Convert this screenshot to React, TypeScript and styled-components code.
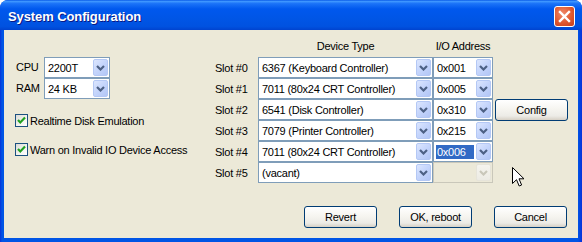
import React from "react";
import styled, { createGlobalStyle } from "styled-components";

const GlobalStyle = createGlobalStyle`
  html, body {
    margin: 0;
    padding: 0;
    background: #ffffff;
  }
  body {
    width: 582px;
    height: 242px;
    overflow: hidden;
    font-family: "Liberation Sans", Arial, sans-serif;
    font-size: 11px;
    letter-spacing: -0.25px;
    color: #000000;
  }
`;

const slots = [
  { device: "6367 (Keyboard Controller)", io: "0x001" },
  { device: "7011 (80x24 CRT Controller)", io: "0x005" },
  { device: "6541 (Disk Controller)", io: "0x310" },
  { device: "7079 (Printer Controller)", io: "0x215" },
  { device: "7011 (80x24 CRT Controller)", io: "0x006", selected: true },
  { device: "(vacant)", io: "", disabled: true },
];

const Chevron = ({ disabled }: { disabled?: boolean }) => (
  <svg width="9" height="6" viewBox="0 0 9 6">
    <path
      d="M1 1 L4.5 4.5 L8 1"
      fill="none"
      stroke={disabled ? "#c9c7ba" : "#4d6185"}
      strokeWidth="2.2"
    />
  </svg>
);

const Combo = ({
  value,
  width,
  selected,
  disabled,
}: {
  value: string;
  width: number;
  selected?: boolean;
  disabled?: boolean;
}) => (
  <ComboBox $width={width} $disabled={disabled}>
    <Field $selected={selected}>{value}</Field>
    <DropButton $disabled={disabled}>
      <Chevron disabled={disabled} />
    </DropButton>
  </ComboBox>
);

const Check = ({ label }: { label: string }) => (
  <CheckRow>
    <CheckBox>
      <svg width="11" height="11" viewBox="0 0 11 11">
        <path d="M2 5 L4.3 7.4 L9 2.6" fill="none" stroke="#21a121" strokeWidth="2.2" />
      </svg>
    </CheckBox>
    <span>{label}</span>
  </CheckRow>
);

const App = () => {
  return (
    <>
      <GlobalStyle />
      <Window>
        <TitleBar>
          <Title>System Configuration</Title>
          <CloseButton>
            <svg width="13" height="13" viewBox="0 0 13 13">
              <path d="M2 2 L11 11 M11 2 L2 11" stroke="#ffffff" strokeWidth="2.4" strokeLinecap="square" />
            </svg>
          </CloseButton>
        </TitleBar>
        <Client>
          <Main>
            <LeftPanel>
              <HwGrid>
                <Label>CPU</Label>
                <Combo value="2200T" width={66} />
                <Label>RAM</Label>
                <Combo value="24 KB" width={66} />
              </HwGrid>
              <CheckList>
                <Check label="Realtime Disk Emulation" />
                <Check label="Warn on Invalid IO Device Access" />
              </CheckList>
            </LeftPanel>
            <SlotGrid>
              <Header $col={2}>Device Type</Header>
              <Header $col={3}>I/O Address</Header>
              {slots.map((s, i) => (
                <React.Fragment key={i}>
                  <SlotLabel $row={i + 2}>Slot #{i}</SlotLabel>
                  <Cell $row={i + 2} $col={2}>
                    <Combo value={s.device} width={175} />
                  </Cell>
                  <Cell $row={i + 2} $col={3}>
                    <Combo value={s.io} width={60} selected={s.selected} disabled={s.disabled} />
                  </Cell>
                </React.Fragment>
              ))}
              <ConfigCell>
                <Button>Config</Button>
              </ConfigCell>
            </SlotGrid>
          </Main>
          <Footer>
            <Button>Revert</Button>
            <Button>OK, reboot</Button>
            <Button>Cancel</Button>
          </Footer>
          <Cursor>
            <svg width="13" height="21" viewBox="0 0 13 21">
              <path
                d="M0.5 0.5 L0.5 16.5 L4.5 12.7 L7.2 19 L9.6 18 L7 11.8 L12 11.8 Z"
                fill="#ffffff"
                stroke="#000000"
                strokeWidth="1"
              />
            </svg>
          </Cursor>
        </Client>
      </Window>
    </>
  );
};

export default App;

const Window = styled.div`
  width: 582px;
  height: 242px;
  display: flex;
  flex-direction: column;
  border-radius: 8px 8px 0 0;
  overflow: hidden;
  background: linear-gradient(90deg, #0831d9 0px, #0055e5 2px, #0055e5 578px, #0831d9 582px);
  box-sizing: border-box;
`;

const TitleBar = styled.div`
  height: 30px;
  flex-shrink: 0;
  display: flex;
  align-items: center;
  justify-content: space-between;
  padding: 0 7px 0 8px;
  box-sizing: border-box;
  background: linear-gradient(
    180deg,
    #0a5be8 0%,
    #3d95ff 5%,
    #1b73f8 12%,
    #0058ee 30%,
    #0055e5 65%,
    #0052e0 88%,
    #0043cf 100%
  );
`;

const Title = styled.div`
  color: #ffffff;
  font-family: "Liberation Sans", Arial, sans-serif;
  font-weight: bold;
  font-size: 13px;
  letter-spacing: -0.1px;
  text-shadow: 1px 1px #0a1883;
  margin-top: 2px;
`;

const CloseButton = styled.div`
  width: 21px;
  height: 21px;
  margin-top: 2px;
  box-sizing: border-box;
  border: 1px solid #ffffff;
  border-radius: 3px;
  background: radial-gradient(circle at 40% 35%, #f08a6b 0%, #e0582f 55%, #c43d1a 100%);
  display: flex;
  align-items: center;
  justify-content: center;
`;

const Client = styled.div`
  flex: 1;
  margin: 0 4px 4px 4px;
  background: #ece9d8;
  display: flex;
  flex-direction: column;
  position: relative;
`;

const Main = styled.div`
  display: flex;
  padding-top: 9px;
`;

const LeftPanel = styled.div`
  width: 211px;
  box-sizing: border-box;
  padding: 18px 0 0 12px;
`;

const HwGrid = styled.div`
  display: grid;
  grid-template-columns: 28px 66px;
  grid-auto-rows: 21px;
  align-items: center;
`;

const Label = styled.span`
  line-height: 13px;
`;

const CheckList = styled.div`
  display: flex;
  flex-direction: column;
  gap: 14px;
  margin: 14px 0 0 -1px;
`;

const CheckRow = styled.div`
  height: 15px;
  display: flex;
  align-items: center;
  gap: 2px;
`;

const CheckBox = styled.div`
  width: 13px;
  height: 13px;
  box-sizing: border-box;
  border: 1px solid #1c5180;
  background: linear-gradient(135deg, #dcdcd7 0%, #f4f4f0 60%, #ffffff 100%);
  display: flex;
  align-items: center;
  justify-content: center;
`;

const SlotGrid = styled.div`
  display: grid;
  grid-template-columns: 43px 175px 60px 75px;
  grid-template-rows: 18px repeat(6, 21px);
`;

const Header = styled.div<{ $col: number }>`
  grid-row: 1;
  grid-column: ${(p) => p.$col};
  text-align: center;
  line-height: 14px;
`;

const SlotLabel = styled.div<{ $row: number }>`
  grid-row: ${(p) => p.$row};
  grid-column: 1;
  align-self: center;
`;

const Cell = styled.div<{ $row: number; $col: number }>`
  grid-row: ${(p) => p.$row};
  grid-column: ${(p) => p.$col};
`;

const ConfigCell = styled.div`
  grid-row: 4;
  grid-column: 4;
  display: flex;
  justify-content: flex-end;
  align-items: center;
`;

const ComboBox = styled.div<{ $width: number; $disabled?: boolean }>`
  width: ${(p) => p.$width}px;
  height: 21px;
  box-sizing: border-box;
  border: 1px solid ${(p) => (p.$disabled ? "#c9c7ba" : "#7f9db9")};
  background: ${(p) => (p.$disabled ? "#ece9d8" : "#ffffff")};
  display: flex;
  align-items: stretch;
  padding: 1px;
`;

const Field = styled.div<{ $selected?: boolean }>`
  flex: 1;
  display: flex;
  align-items: center;
  white-space: nowrap;
  overflow: hidden;
  padding-left: ${(p) => (p.$selected ? "1px" : "2px")};
  margin: ${(p) => (p.$selected ? "2px 2px 1px 1px" : "0")};
  background: ${(p) => (p.$selected ? "#316ac5" : "transparent")};
  color: ${(p) => (p.$selected ? "#ffffff" : "#000000")};
`;

const DropButton = styled.div<{ $disabled?: boolean }>`
  width: 15px;
  box-sizing: border-box;
  border: 1px solid ${(p) => (p.$disabled ? "#e6e4da" : "#b4c8f5")};
  border-radius: 2px;
  background: ${(p) =>
    p.$disabled
      ? "linear-gradient(180deg, #f5f4ee 0%, #ecebe4 100%)"
      : "linear-gradient(135deg, #dce6fe 0%, #c6d6fc 45%, #b2c6f6 100%)"};
  display: flex;
  align-items: center;
  justify-content: center;
`;

const Button = styled.div`
  width: 73px;
  height: 22px;
  box-sizing: border-box;
  border: 1px solid #003c74;
  border-radius: 3px;
  background: linear-gradient(180deg, #ffffff 0%, #f6f5f0 45%, #ecebe6 80%, #d6d0c5 100%);
  display: flex;
  align-items: center;
  justify-content: center;
`;

const Footer = styled.div`
  margin-top: auto;
  display: flex;
  justify-content: flex-end;
  gap: 22px;
  padding: 0 11px 10px 0;
`;

const Cursor = styled.div`
  position: absolute;
  left: 508px;
  top: 137px;
  line-height: 0;
`;
